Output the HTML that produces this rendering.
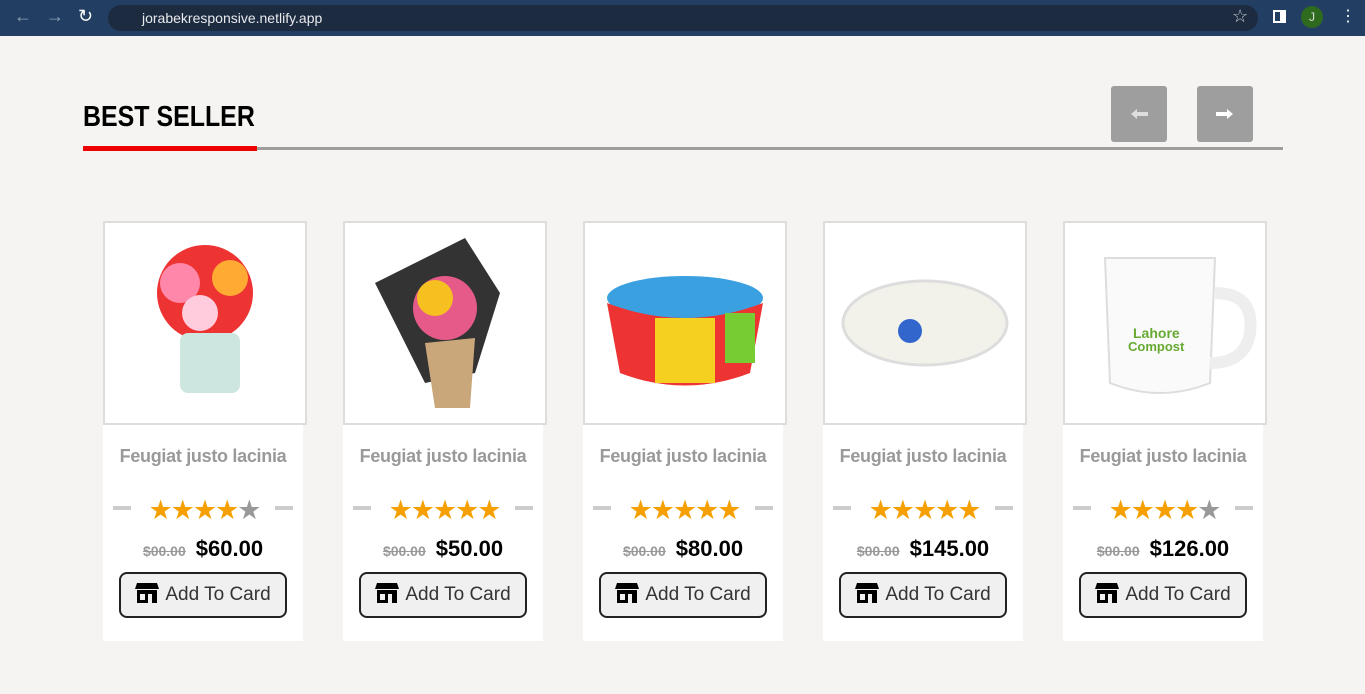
<!DOCTYPE html>
<html><head><meta charset="utf-8"><style>
*{margin:0;padding:0;box-sizing:border-box}
body{width:1365px;height:694px;background:#f5f4f2;font-family:"Liberation Sans",sans-serif;position:relative;overflow:hidden}
.bar{position:absolute;left:0;top:0;width:1365px;height:36px;background:#223f63}
.url{position:absolute;left:108px;top:5px;width:1150px;height:26px;border-radius:13px;background:#1d2b40;color:#e8eaed;font-size:14px;line-height:26px;padding-left:34px}
.ic{position:absolute;color:#8fa0b5;font-size:18px;top:6px}
h1{position:absolute;left:83px;top:101px;font-size:29px;font-weight:bold;color:#000;transform:scaleX(0.86);transform-origin:left}
.line{position:absolute;left:83px;top:147px;width:1200px;height:3px;background:#9e9d9b}
.red{position:absolute;left:83px;top:146px;width:174px;height:5px;background:#e00}
.btn{position:absolute;top:86px;width:56px;height:56px;background:#9e9e9e;border-radius:3px}
.card{position:absolute;top:221px;width:200px;height:420px;background:#fff}
.img{position:absolute;left:0;top:0;width:204px;height:204px;border:2px solid #ddd;background:#fff}
.t{position:absolute;top:225px;width:100%;text-align:center;color:#999;font-weight:bold;font-size:18px;letter-spacing:-0.3px}
.st{position:absolute;top:274px;left:0;width:100%;text-align:center;font-size:27px;color:#f5a000;letter-spacing:-2px;padding-left:2px}
.st .g{color:#999}
.dash{position:absolute;top:285px;width:18px;height:4px;background:#ccc}
.pr{position:absolute;top:315px;width:100%;text-align:center}
.pr s{color:#999;font-size:14px;font-weight:bold;margin-right:10px}
.pr b{font-size:22px;color:#000}
.add{position:absolute;left:16px;top:351px;width:168px;height:46px;border:2px solid #222;border-radius:8px;background:#f0f0f0;font-size:19px;color:#333;text-align:center;line-height:42px}
.add svg{vertical-align:-3px;margin-right:6px}
</style></head><body>
<div class="bar"><span class="ic" style="left:14px">←</span><span class="ic" style="left:46px">→</span><span class="ic" style="left:78px;color:#fff">↻</span>
<div class="url">jorabekresponsive.netlify.app</div>
<span class="ic" style="left:1232px;color:#c7ccd3">☆</span>
<div style="position:absolute;left:1273px;top:10px;width:13px;height:13px;border:2px solid #fff;border-right-width:6px"></div>
<div style="position:absolute;left:1301px;top:6px;width:22px;height:22px;border-radius:50%;background:#2f6b1e;color:#ddd;font-size:12px;text-align:center;line-height:22px">J</div>
<span class="ic" style="left:1340px;color:#fff;font-size:16px">⋮</span></div>
<h1>BEST SELLER</h1>
<div class="line"></div><div class="red"></div>
<div class="btn" style="left:1111px"><svg width="56" height="56"><path d="M20 28 L26 23 L26 26 L37 26 L37 30 L26 30 L26 33Z" fill="#ddd"/></svg></div>
<div class="btn" style="left:1197px"><svg width="56" height="56"><path d="M36 28 L30 23 L30 26 L19 26 L19 30 L30 30 L30 33Z" fill="#fff"/></svg></div>

<div class="card" style="left:103px"><div class="img"><svg width="200" height="200"><circle cx="100" cy="70" r="48" fill="#e33"/><circle cx="75" cy="60" r="20" fill="#f8a"/><circle cx="125" cy="55" r="18" fill="#fa3"/><circle cx="95" cy="90" r="18" fill="#fcd"/><rect x="75" y="110" width="60" height="60" rx="8" fill="#cde6e0"/></svg></div>
<div class="t">Feugiat justo lacinia</div><div class="dash" style="left:10px"></div><div class="dash" style="left:172px"></div><div class="st">★★★★<span class="g">★</span></div><div class="pr"><s>$00.00</s><b>$60.00</b></div><div class="add"><svg width="24" height="20"><path d="M2 0H22L24 6H0Z M2 7H22V20H17V11H13V20H2Z M5 11H10V17H5Z" fill="#000" fill-rule="evenodd"/></svg>Add To Card</div></div>

<div class="card" style="left:343px"><div class="img"><svg width="200" height="200"><polygon points="30,60 120,15 155,70 130,150 80,160" fill="#333"/><circle cx="100" cy="85" r="32" fill="#e65a8a"/><circle cx="90" cy="75" r="18" fill="#f5c020"/><polygon points="80,120 130,115 125,185 90,185" fill="#c9a77a"/></svg></div>
<div class="t">Feugiat justo lacinia</div><div class="dash" style="left:10px"></div><div class="dash" style="left:172px"></div><div class="st">★★★★★</div><div class="pr"><s>$00.00</s><b>$50.00</b></div><div class="add"><svg width="24" height="20"><path d="M2 0H22L24 6H0Z M2 7H22V20H17V11H13V20H2Z M5 11H10V17H5Z" fill="#000" fill-rule="evenodd"/></svg>Add To Card</div></div>

<div class="card" style="left:583px"><div class="img"><svg width="200" height="200"><ellipse cx="100" cy="75" rx="78" ry="22" fill="#3aa0e0"/><path d="M22 80 L35 150 Q100 175 165 150 L178 80 Q100 110 22 80Z" fill="#e33"/><rect x="70" y="95" width="60" height="65" fill="#f5d020"/><rect x="140" y="90" width="30" height="50" fill="#7c3"/></svg></div>
<div class="t">Feugiat justo lacinia</div><div class="dash" style="left:10px"></div><div class="dash" style="left:172px"></div><div class="st">★★★★★</div><div class="pr"><s>$00.00</s><b>$80.00</b></div><div class="add"><svg width="24" height="20"><path d="M2 0H22L24 6H0Z M2 7H22V20H17V11H13V20H2Z M5 11H10V17H5Z" fill="#000" fill-rule="evenodd"/></svg>Add To Card</div></div>

<div class="card" style="left:823px"><div class="img"><svg width="200" height="200"><ellipse cx="100" cy="100" rx="82" ry="42" fill="#f2f2ea" stroke="#ddd" stroke-width="3"/><circle cx="85" cy="108" r="12" fill="#36c"/></svg></div>
<div class="t">Feugiat justo lacinia</div><div class="dash" style="left:10px"></div><div class="dash" style="left:172px"></div><div class="st">★★★★★</div><div class="pr"><s>$00.00</s><b>$145.00</b></div><div class="add"><svg width="24" height="20"><path d="M2 0H22L24 6H0Z M2 7H22V20H17V11H13V20H2Z M5 11H10V17H5Z" fill="#000" fill-rule="evenodd"/></svg>Add To Card</div></div>

<div class="card" style="left:1063px"><div class="img"><svg width="200" height="200"><path d="M40 35 L150 35 L145 160 Q95 180 45 160Z" fill="#fafafa" stroke="#ddd" stroke-width="2"/><path d="M150 70 Q190 70 185 110 Q180 140 145 140" fill="none" stroke="#eee" stroke-width="12"/><text x="68" y="115" font-family="Liberation Sans" font-size="14" font-weight="bold" fill="#6a3">Lahore</text><text x="63" y="128" font-family="Liberation Sans" font-size="13" font-weight="bold" fill="#6a3">Compost</text></svg></div>
<div class="t">Feugiat justo lacinia</div><div class="dash" style="left:10px"></div><div class="dash" style="left:172px"></div><div class="st">★★★★<span class="g">★</span></div><div class="pr"><s>$00.00</s><b>$126.00</b></div><div class="add"><svg width="24" height="20"><path d="M2 0H22L24 6H0Z M2 7H22V20H17V11H13V20H2Z M5 11H10V17H5Z" fill="#000" fill-rule="evenodd"/></svg>Add To Card</div></div>
</body></html>
